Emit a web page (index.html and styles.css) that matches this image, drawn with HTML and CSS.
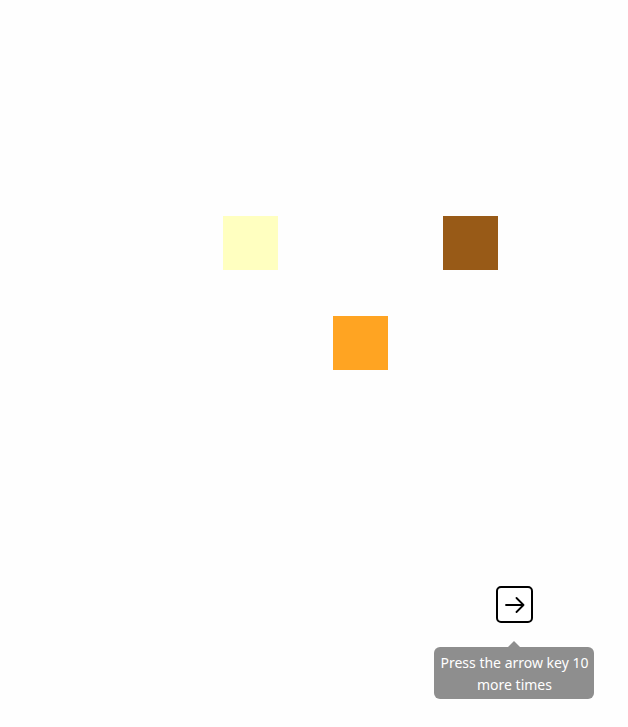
FILE: index.html
```html
<!DOCTYPE html>
<html lang="en">
<head>
<meta charset="utf-8">
<title>Squares</title>
<link rel="stylesheet" href="styles.css">
</head>
<body>
<main class="page">
  <section class="board">
    <div class="row">
      <div class="square square-yellow"></div>
      <div class="square square-brown"></div>
    </div>
    <div class="row row-center">
      <div class="square square-orange"></div>
    </div>
  </section>
  <section class="controls">
    <button class="arrow-btn" type="button" aria-label="Next">
      <svg width="22" height="18" viewBox="0 0 22 18" fill="none" stroke="#000" stroke-width="1.8" stroke-linecap="round" stroke-linejoin="round">
        <path d="M2 9H19.5M12.5 2L19.5 9L12.5 16"/>
      </svg>
    </button>
    <div class="tooltip">Press the arrow key 10 more times</div>
  </section>
</main>
</body>
</html>
```
FILE: styles.css
```css
html, body {
  margin: 0;
  padding: 0;
  background: #fefefe;
}
.page {
  display: flex;
  flex-direction: column;
  font-family: "Noto Sans", "Open Sans", sans-serif;
}
.board {
  width: 275px;
  margin: 216px 0 0 223px;
  display: flex;
  flex-direction: column;
  gap: 46px;
}
.row {
  display: flex;
  justify-content: space-between;
}
.row-center {
  justify-content: center;
}
.square {
  width: 55px;
  height: 54px;
}
.square-yellow { background: #ffffc0; }
.square-brown { background: #985a17; }
.square-orange { background: #ffa422; }
.controls {
  width: 160px;
  margin: 216px 0 0 434px;
  display: flex;
  flex-direction: column;
  align-items: center;
  gap: 24px;
}
.arrow-btn {
  width: 37px;
  height: 37px;
  margin-left: 1px;
  padding: 0;
  border: 2px solid #000;
  border-radius: 5px;
  background: #fff;
  display: flex;
  align-items: center;
  justify-content: center;
}
.tooltip {
  position: relative;
  box-sizing: border-box;
  width: 160px;
  padding: 5px 0 3px 1px;
  background: #8e8e8e;
  color: #fff;
  border-radius: 6px;
  font-size: 14px;
  line-height: 22px;
  text-align: center;
}
.tooltip::before {
  content: "";
  position: absolute;
  top: -6px;
  left: 50%;
  margin-left: -6px;
  border-left: 6px solid transparent;
  border-right: 6px solid transparent;
  border-bottom: 6px solid #8e8e8e;
}
```
